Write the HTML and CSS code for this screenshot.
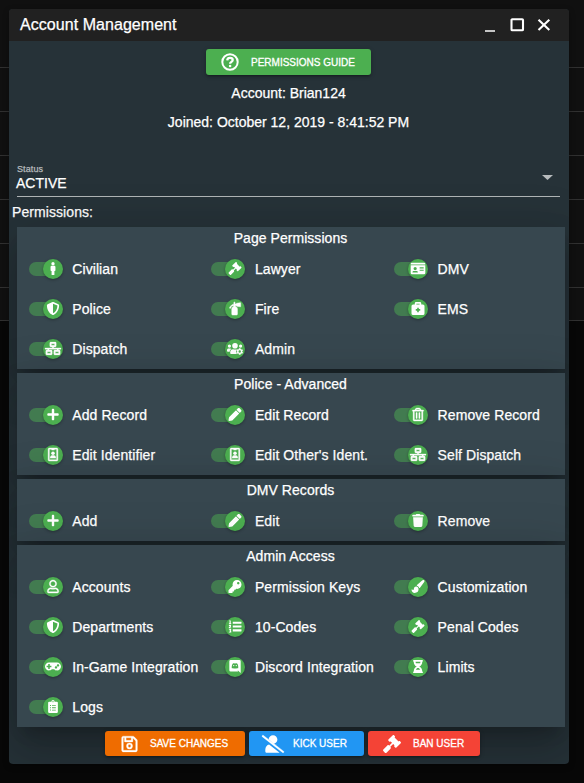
FILE: index.html
```html
<!DOCTYPE html>
<html lang="en">
<head>
<meta charset="utf-8">
<title>Account Management</title>
<link rel="stylesheet" href="styles.css">
</head>
<body>
<svg class="sprite" aria-hidden="true">
<symbol id="male" viewBox="0 0 192 512"><path d="M96 0c35.346 0 64 28.654 64 64s-28.654 64-64 64-64-28.654-64-64S60.654 0 96 0m48 144h-11.36c-22.711 10.443-49.59 10.894-73.28 0H48c-26.51 0-48 21.49-48 48v136c0 13.255 10.745 24 24 24h16v136c0 13.255 10.745 24 24 24h64c13.255 0 24-10.745 24-24V352h16c13.255 0 24-10.745 24-24V192c0-26.51-21.49-48-48-48z"/></symbol>
<symbol id="gavel" viewBox="0 0 512 512"><path d="M504.971 199.362l-22.627-22.627c-9.373-9.373-24.569-9.373-33.941 0l-5.657 5.657L329.608 69.255l5.657-5.657c9.373-9.373 9.373-24.569 0-33.941L312.638 7.029c-9.373-9.373-24.569-9.373-33.941 0L154.246 131.48c-9.373 9.373-9.373 24.569 0 33.941l22.627 22.627c9.373 9.373 24.569 9.373 33.941 0l5.657-5.657 39.598 39.598-81.04 81.04-5.657-5.657c-12.497-12.497-32.758-12.497-45.255 0L9.373 412.118c-12.497 12.497-12.497 32.758 0 45.255l45.255 45.255c12.497 12.497 32.758 12.497 45.255 0l114.745-114.745c12.497-12.497 12.497-32.758 0-45.255l-5.657-5.657 81.04-81.04 39.598 39.598-5.657 5.657c-9.373 9.373-9.373 24.569 0 33.941l22.627 22.627c9.373 9.373 24.569 9.373 33.941 0l124.451-124.451c9.372-9.372 9.372-24.568 0-33.941z"/></symbol>
<symbol id="shield" viewBox="0 0 512 512"><path d="M466.5 83.7l-192-80a48.15 48.15 0 0 0-36.9 0l-192 80C27.7 91.1 16 108.6 16 128c0 198.5 114.5 335.7 221.5 380.3 11.8 4.9 25.1 4.9 36.9 0C360.1 472.6 496 349.3 496 128c0-19.4-11.7-36.9-29.5-44.3zM256.1 446.3l-.1-381 175.9 73.3c-3.3 151.4-82.1 261.1-175.8 307.7z"/></symbol>
<symbol id="key" viewBox="0 0 512 512"><path d="M512 176.001C512 273.203 433.202 352 336 352c-11.22 0-22.19-1.062-32.827-3.069l-24.012 27.014A23.999 23.999 0 0 1 261.223 384H224v40c0 13.255-10.745 24-24 24h-40v40c0 13.255-10.745 24-24 24H24c-13.255 0-24-10.745-24-24v-78.059c0-6.365 2.529-12.47 7.029-16.971l161.802-161.802C163.108 213.814 160 195.271 160 176 160 78.798 238.797.001 335.999 0 433.488-.001 512 78.511 512 176.001zM336 128c0 26.51 21.49 48 48 48s48-21.49 48-48-21.49-48-48-48-48 21.49-48 48z"/></symbol>
<symbol id="pencil" viewBox="0 0 512 512"><path d="M497.9 142.1l-46.1 46.1c-4.7 4.7-12.3 4.7-17 0l-111-111c-4.7-4.7-4.7-12.3 0-17l46.1-46.1c18.7-18.7 49.1-18.7 67.9 0l60.1 60.1c18.8 18.7 18.8 49.1 0 67.9zM284.2 99.8L21.6 362.4.4 483.9c-2.9 16.4 11.4 30.6 27.8 27.8l121.5-21.3 262.6-262.6c4.7-4.7 4.7-12.3 0-17l-111-111c-4.8-4.7-12.4-4.7-17.1 0z"/></symbol>
<symbol id="plus" viewBox="0 0 448 512"><path d="M416 208H272V64c0-17.67-14.33-32-32-32h-32c-17.67 0-32 14.33-32 32v144H32c-17.67 0-32 14.33-32 32v32c0 17.67 14.33 32 32 32h144v144c0 17.67 14.33 32 32 32h32c17.67 0 32-14.33 32-32V304h144c17.67 0 32-14.33 32-32v-32c0-17.67-14.33-32-32-32z"/></symbol>
<symbol id="trash" viewBox="0 0 448 512"><path d="M432 32H312l-9.4-18.7A24 24 0 0 0 281.1 0H166.8a23.72 23.72 0 0 0-21.4 13.3L136 32H16A16 16 0 0 0 0 48v32a16 16 0 0 0 16 16h416a16 16 0 0 0 16-16V48a16 16 0 0 0-16-16zM53.2 467a48 48 0 0 0 47.9 45h245.8a48 48 0 0 0 47.9-45L416 128H32z"/></symbol>
<symbol id="trash-outline" viewBox="0 0 448 512"><path stroke="#fff" stroke-width="14" d="M268 416h24a12 12 0 0 0 12-12V188a12 12 0 0 0-12-12h-24a12 12 0 0 0-12 12v216a12 12 0 0 0 12 12zM432 80h-82.41l-34-56.7A48 48 0 0 0 274.41 0H173.59a48 48 0 0 0-41.16 23.3L98.41 80H16A16 16 0 0 0 0 96v16a16 16 0 0 0 16 16h16v336a48 48 0 0 0 48 48h288a48 48 0 0 0 48-48V128h16a16 16 0 0 0 16-16V96a16 16 0 0 0-16-16zM171.84 50.91A6 6 0 0 1 177 48h94a6 6 0 0 1 5.15 2.91L293.61 80H154.39zM368 464H80V128h288zm-212-48h24a12 12 0 0 0 12-12V188a12 12 0 0 0-12-12h-24a12 12 0 0 0-12 12v216a12 12 0 0 0 12 12z"/></symbol>
<symbol id="user" viewBox="0 0 448 512"><path stroke="#fff" stroke-width="14" d="M313.6 304c-28.7 0-42.5 16-89.6 16-47.1 0-60.8-16-89.6-16C60.2 304 0 364.2 0 438.4V464c0 26.5 21.5 48 48 48h352c26.5 0 48-21.5 48-48v-25.6c0-74.2-60.2-134.4-134.4-134.4zM400 464H48v-25.6c0-47.6 38.8-86.4 86.4-86.4 14.6 0 38.3 16 89.6 16 51.7 0 74.9-16 89.6-16 47.6 0 86.4 38.8 86.4 86.4V464zM224 288c79.5 0 144-64.5 144-144S303.5 0 224 0 80 64.5 80 144s64.5 144 144 144zm0-240c52.9 0 96 43.1 96 96s-43.1 96-96 96-96-43.1-96-96 43.1-96 96-96z"/></symbol>
<symbol id="gamepad" viewBox="0 0 640 512"><path d="M480 96H160C71.6 96 0 167.6 0 256s71.6 160 160 160c44.8 0 85.2-18.4 114.2-48h91.5c29 29.6 69.5 48 114.2 48 88.4 0 160-71.6 160-160S568.4 96 480 96zM256 276c0 6.6-5.4 12-12 12h-52v52c0 6.6-5.4 12-12 12h-40c-6.6 0-12-5.4-12-12v-52H76c-6.6 0-12-5.4-12-12v-40c0-6.6 5.4-12 12-12h52v-52c0-6.6 5.4-12 12-12h40c6.6 0 12 5.4 12 12v52h52c6.6 0 12 5.4 12 12v40zm184 68c-26.5 0-48-21.5-48-48s21.5-48 48-48 48 21.5 48 48-21.5 48-48 48zm80-80c-26.5 0-48-21.5-48-48s21.5-48 48-48 48 21.5 48 48-21.5 48-48 48z"/></symbol>
<symbol id="id-card" viewBox="0 0 576 512"><path fill-rule="evenodd" d="M48 32h480a48 48 0 0 1 48 48v16H0V80a48 48 0 0 1 48-48zM0 128h576v304a48 48 0 0 1-48 48H48a48 48 0 0 1-48-48zm352 64v32h160v-32zm0 64v32h160v-32zm0 64v32h160v-32zM176 192a64 64 0 1 0 0 128 64 64 0 0 0 0-128zM66 396c-3 12 4 20 14 20h192c10 0 17-8 14-20-8-26-32-44-61-44h-98c-29 0-53 18-61 44z"/></symbol>
<symbol id="medkit" viewBox="0 0 512 512"><path fill-rule="evenodd" d="M128 96V56a56 56 0 0 1 56-56h144a56 56 0 0 1 56 56v40h64a64 64 0 0 1 64 64v288a64 64 0 0 1-64 64H64a64 64 0 0 1-64-64V160a64 64 0 0 1 64-64zm64 0h128V64H192zm32 128v56h-56v64h56v56h64v-56h56v-64h-56v-56z"/></symbol>
<symbol id="extinguisher" viewBox="0 0 448 512"><path stroke="#fff" stroke-width="18" d="M434 26 288 51c-10 2-16 7-16 16v11h-46V24a24 24 0 0 0-48 0v62C110 100 58 126 12 220c-9 20 0 30 10 34s26 2 33-14c25-58 54-84 92-88h20v24c-42 16-71 55-71 100v204c0 18 14 32 32 32h160c18 0 32-14 32-32V276c0-46-30-86-74-101v-41h26v13c0 8 6 14 16 16l146 25c8 1 14-5 14-13V39c0-8-6-14-14-13z"/></symbol>
<symbol id="users-cog" viewBox="0 0 640 512"><circle cx="96" cy="160" r="64"/><circle cx="320" cy="144" r="112"/><circle cx="544" cy="160" r="64"/><path d="M64 256h64c20 0 36 8 48 20-42 24-62 58-68 108H32c-18 0-32-14-32-32v-32c0-36 28-64 64-64zM128 432v-29c0-66 50-115 115-115 52 16 102 16 151 0-38 70-34 132 5 192H176c-26 0-48-22-48-48z"/><path fill-rule="evenodd" d="M477 242h64l7 38 24 14 36-13 32 55-29 25v28l29 25-32 55-36-13-24 14-7 38h-64l-7-38-24-14-36 13-32-55 29-25v-28l-29-25 32-55 36 13 24-14zm32 86a48 48 0 1 0 0 96 48 48 0 0 0 0-96z"/></symbol>
<symbol id="network" viewBox="0 0 640 512"><path fill-rule="evenodd" stroke="#fff" stroke-width="12" d="M224 0h192c18 0 32 14 32 32v128c0 18-14 32-32 32h-64v40h272c9 0 16 7 16 16v24c0 9-7 16-16 16h-80v32h32c18 0 32 14 32 32v128c0 18-14 32-32 32H384c-18 0-32-14-32-32V352c0-18 14-32 32-32h96v-32H160v32h96c18 0 32 14 32 32v128c0 18-14 32-32 32H64c-18 0-32-14-32-32V352c0-18 14-32 32-32h32v-32H16c-9 0-16-7-16-16v-24c0-9 7-16 16-16h272v-40h-64c-18 0-32-14-32-32V32c0-18 14-32 32-32zm32 64v64h128V64zM96 384v64h128v-64zm320 0v64h128v-64z"/></symbol>
<symbol id="badge" viewBox="0 0 384 512"><path fill-rule="evenodd" stroke="#fff" stroke-width="16" d="M48 0h288a48 48 0 0 1 48 48v416a48 48 0 0 1-48 48H48a48 48 0 0 1-48-48V48A48 48 0 0 1 48 0zm0 48v416h288V48H248v32H136V48z"/><circle cx="192" cy="206" r="70"/><path d="M76 406c0-68 34-116 80-116h72c46 0 80 48 80 116z"/></symbol>
<symbol id="list" viewBox="0 0 512 512"><path d="M168 64h328c9 0 16 7 16 16v48c0 9-7 16-16 16H168zM168 216h328c9 0 16 7 16 16v48c0 9-7 16-16 16H168zM168 368h328c9 0 16 7 16 16v48c0 9-7 16-16 16H168zM24 16h64v116h20v28H16v-28h24V44H24zM16 188h84v65l-38 39h42v28H12v-31l48-52H16zM16 352h88v64l-15 12 19 18v50H12v-30h48v-22H34v-28h30v-34H16z"/></symbol>
<symbol id="discord" viewBox="0 0 448 512"><path fill-rule="evenodd" d="M52 0h344a52 52 0 0 1 52 52v460l-55-49-31-28-32-30 13 46H52a52 52 0 0 1-52-52V52A52 52 0 0 1 52 0zm45 329c17 0 31-1 48-1 35 14 123 14 158 0l47 1c10-76-7-151-34-184-22-16-43-20-62-19l-10 12c-13-2-27-2-40 0l-10-12c-20 0-41 5-62 19-28 46-43 112-35 184zm77-137a26 28 0 1 1 0 56 26 28 0 0 1 0-56zm100 0a26 28 0 1 1 0 56 26 28 0 0 1 0-56z"/></symbol>
<symbol id="brush" viewBox="0 0 512 512"><path d="M460 0c-16 0-30 8-42 18L225 189c-10 10-17 22-18 36 45 12 83 46 98 91 15-3 28-12 37-25L499 76c7-12 13-24 13-37 0-23-25-39-52-39zM184 259c-58 0-91 42-91 92 0 42-30 54-70 25-12-9-23 0-23 12 9 76 52 124 126 124 90 0 153-58 153-143 0-60-43-110-95-110z"/></symbol>
<symbol id="hourglass" viewBox="0 0 384 512"><path fill-rule="evenodd" d="M24 0h336a24 24 0 0 1 24 24v16a24 24 0 0 1-24 24c0 91-51 168-120 192 69 24 120 101 120 192a24 24 0 0 1 24 24v16a24 24 0 0 1-24 24H24a24 24 0 0 1-24-24v-16a24 24 0 0 1 24-24c0-91 51-168 120-192C75 232 24 155 24 64A24 24 0 0 1 0 40V24A24 24 0 0 1 24 0zm72 64c0 24 6 46 16 64h160c10-18 16-40 16-64zm14 320h164c-17-42-47-69-82-69s-65 27-82 69z"/></symbol>
<symbol id="clipboard" viewBox="0 0 384 512"><path fill-rule="evenodd" d="M48 64h80a64 64 0 0 1 128 0h80a48 48 0 0 1 48 48v352a48 48 0 0 1-48 48H48a48 48 0 0 1-48-48V112a48 48 0 0 1 48-48zm144-24a24 24 0 1 0 0 48 24 24 0 0 0 0-48zm-40 158v30h150v-30zm0 92v30h150v-30zm0 92v30h150v-30zM76 194v38h38v-38zm0 92v38h38v-38zm0 92v38h38v-38z"/></symbol>
<symbol id="save" viewBox="0 0 448 512"><path fill-rule="evenodd" stroke="#fff" stroke-width="8" d="M48 32h268a48 48 0 0 1 34 14l84 84a48 48 0 0 1 14 34v268a48 48 0 0 1-48 48H48a48 48 0 0 1-48-48V80a48 48 0 0 1 48-48zm0 48v352h352V168l-80-80v88a24 24 0 0 1-24 24H104a24 24 0 0 1-24-24V80zm80 0v72h144V80zM224 224a88 88 0 1 1 0 176 88 88 0 0 1 0-176zm0 48a40 40 0 1 0 0 80 40 40 0 0 0 0-80z"/></symbol>
<symbol id="user-slash" viewBox="0 0 640 512"><path stroke="#fff" stroke-width="10" d="M634 471 36 3.500c-9-6-17-4-23 3L3.500 19c-6 8-5 17 3 23L604 508c7 6 17 5 23-3l10-12c5-7 4-17-3-22z"/><path d="M96 422v42c0 26 22 48 48 48h352c6 0 12-1 17-3L207 270c-60 10-111 76-111 152zM320 256c71 0 128-57 128-128S391 0 320 0c-68 0-122 50-128 118l149 136c30 20 70 34 92 34z"/></symbol>
<symbol id="help" viewBox="0 0 18 18"><circle class="stroke" cx="9" cy="9" r="7.700" stroke-width="2"/><path class="stroke" stroke-width="2.300" d="M6.200 7.300C6.400 5.700 7.500 4.900 9 4.900c1.600 0 2.700.8 2.700 2.100 0 1.900-2.600 1.800-2.600 3.800"/><circle cx="9.100" cy="13" r="1.300"/></symbol>
</svg>

<div class="backdrop" aria-hidden="true"><div class="brow first"></div><div class="brow"></div><div class="brow"></div><div class="brow"></div><div class="brow"></div><div class="brow"></div><div class="brow last"></div></div>

<main class="window">
  <header class="titlebar">
    <h1>Account Management</h1>
    <svg class="controls" viewBox="0 0 68 16" aria-hidden="true"><path fill="#c4c4c4" d="M0 13h10v2H0z"/><rect x="26.500" y="2.300" width="11.500" height="11" rx=".8" stroke-width="2.100" class="stroke"/><path class="stroke" stroke-width="2.100" d="m53.500 2.700 10.800 10.300m0-10.300L53.500 13"/></svg>
  </header>
  <section class="account">
    <button class="btn guide"><svg class="help"><use href="#help"/></svg>PERMISSIONS GUIDE</button>
    <p>Account: Brian124</p>
    <p>Joined: October 12, 2019 - 8:41:52 PM</p>
  </section>
  <div class="select"><div><span class="caption">Status</span><span class="value">ACTIVE</span></div><i class="caret"></i></div>
  <h2 class="heading">Permissions:</h2>
  <div class="cards">
    <section class="card"><h3>Page Permissions</h3><div class="grid">
      <div class="perm"><span class="toggle"><i><svg><use href="#male"/></svg></i></span>Civilian</div>
      <div class="perm"><span class="toggle"><i><svg><use href="#gavel"/></svg></i></span>Lawyer</div>
      <div class="perm"><span class="toggle"><i><svg><use href="#id-card"/></svg></i></span>DMV</div>
      <div class="perm"><span class="toggle"><i><svg><use href="#shield"/></svg></i></span>Police</div>
      <div class="perm"><span class="toggle"><i><svg><use href="#extinguisher"/></svg></i></span>Fire</div>
      <div class="perm"><span class="toggle"><i><svg><use href="#medkit"/></svg></i></span>EMS</div>
      <div class="perm"><span class="toggle"><i><svg><use href="#network"/></svg></i></span>Dispatch</div>
      <div class="perm"><span class="toggle"><i><svg><use href="#users-cog"/></svg></i></span>Admin</div>
    </div></section>
    <section class="card"><h3>Police - Advanced</h3><div class="grid">
      <div class="perm"><span class="toggle"><i><svg><use href="#plus"/></svg></i></span>Add Record</div>
      <div class="perm"><span class="toggle"><i><svg><use href="#pencil"/></svg></i></span>Edit Record</div>
      <div class="perm"><span class="toggle"><i><svg><use href="#trash-outline"/></svg></i></span>Remove Record</div>
      <div class="perm"><span class="toggle"><i><svg><use href="#badge"/></svg></i></span>Edit Identifier</div>
      <div class="perm"><span class="toggle"><i><svg><use href="#badge"/></svg></i></span>Edit Other's Ident.</div>
      <div class="perm"><span class="toggle"><i><svg><use href="#network"/></svg></i></span>Self Dispatch</div>
    </div></section>
    <section class="card"><h3>DMV Records</h3><div class="grid">
      <div class="perm"><span class="toggle"><i><svg><use href="#plus"/></svg></i></span>Add</div>
      <div class="perm"><span class="toggle"><i><svg><use href="#pencil"/></svg></i></span>Edit</div>
      <div class="perm"><span class="toggle"><i><svg><use href="#trash"/></svg></i></span>Remove</div>
    </div></section>
    <section class="card"><h3>Admin Access</h3><div class="grid">
      <div class="perm"><span class="toggle"><i><svg><use href="#user"/></svg></i></span>Accounts</div>
      <div class="perm"><span class="toggle"><i><svg><use href="#key"/></svg></i></span>Permission Keys</div>
      <div class="perm"><span class="toggle"><i><svg><use href="#brush"/></svg></i></span>Customization</div>
      <div class="perm"><span class="toggle"><i><svg><use href="#shield"/></svg></i></span>Departments</div>
      <div class="perm"><span class="toggle"><i><svg><use href="#list"/></svg></i></span>10-Codes</div>
      <div class="perm"><span class="toggle"><i><svg><use href="#gavel"/></svg></i></span>Penal Codes</div>
      <div class="perm"><span class="toggle"><i><svg><use href="#gamepad"/></svg></i></span>In-Game Integration</div>
      <div class="perm"><span class="toggle"><i><svg><use href="#discord"/></svg></i></span>Discord Integration</div>
      <div class="perm"><span class="toggle"><i><svg><use href="#hourglass"/></svg></i></span>Limits</div>
      <div class="perm"><span class="toggle"><i><svg><use href="#clipboard"/></svg></i></span>Logs</div>
    </div></section>
  </div>
  <footer class="actions">
    <button class="btn save"><svg><use href="#save"/></svg>SAVE CHANGES</button>
    <button class="btn kick"><svg><use href="#user-slash"/></svg>KICK USER</button>
    <button class="btn ban"><svg><use href="#gavel"/></svg>BAN USER</button>
  </footer>
</main>
</body>
</html>
```
FILE: styles.css
```css
* { box-sizing: border-box; margin: 0; padding: 0; }
body {
  height: 783px;
  padding: 9px 15px 19px 9px;
  overflow: hidden;
  background: #070707;
  color: #fff;
  font: 14px/20px "Liberation Sans", Arial, sans-serif;
  -webkit-text-stroke: .25px currentColor;
}
h1, h2, h3 { font-weight: 400; }
svg { display: block; overflow: visible; fill: #fff; }
symbol { overflow: visible; }
.stroke { fill: none; stroke: #fff; }
.sprite { position: absolute; width: 0; height: 0; }

.backdrop { position: absolute; inset: 0 0 auto; z-index: -1; }
.brow { height: 44px; background: #101010; border-bottom: 1px solid #303030; }
.brow.first { height: 68px; }
.brow.last { height: 33px; }

.window {
  height: 755px;
  border-radius: 4px;
  overflow: hidden;
  background: #263238;
  box-shadow: 0 2px 6px rgba(0, 0, 0, .3);
}
.titlebar {
  display: flex;
  justify-content: space-between;
  height: 32px;
  padding: 6px 16px 0 11px;
  background: #212121;
}
.titlebar h1 { font-size: 16px; letter-spacing: .05px; }
.controls { width: 68px; height: 16px; margin-top: 2px; }

.account { display: flex; flex-direction: column; align-items: center; height: 120px; padding: 8px 1px 0 0; }
.account p { height: 29px; line-height: 20px; }
.btn {
  display: flex;
  align-items: center;
  height: 25px;
  border: 0;
  border-radius: 3px;
  color: #fff;
  font: 10px/25px "Liberation Sans", Arial, sans-serif;
  -webkit-text-stroke: .3px currentColor;
  white-space: nowrap;
  box-shadow: 0 1px 5px rgba(0, 0, 0, .2), 0 2px 2px rgba(0, 0, 0, .14), 0 3px 1px -2px rgba(0, 0, 0, .12);
}
.guide { width: 165px; height: 26px; margin-bottom: 8px; padding-left: 15px; background: #4caf50; }
.help { width: 18px; height: 18px; margin-right: 12px; }

.select {
  display: flex;
  justify-content: space-between;
  height: 36px;
  margin: 0 9px 0 8px;
  border-bottom: 1px solid #b0b5b6;
}
.caption { display: block; height: 14px; padding-top: 1px; color: #b7bbbd; font-size: 9px; line-height: 14px; letter-spacing: .1px; }
.value { display: block; margin-left: -1px; line-height: 16px; }
.caret { width: 11px; height: 5px; margin: 14px 7px 0 0; background: #b7bbbd; clip-path: polygon(0 0, 100% 0, 50% 100%); }
.heading { height: 30px; padding: 5px 0 0 3px; font-size: 14px; letter-spacing: .08px; }

.cards { display: flex; flex-direction: column; gap: 4px; width: 548px; margin-left: 8px; }
.card {
  background: #37474f;
  box-shadow: 0 11px 15px -7px rgba(0, 0, 0, .2), 0 24px 38px 3px rgba(0, 0, 0, .14), 0 9px 46px 8px rgba(0, 0, 0, .12);
}
.card h3 { height: 22px; padding-right: 1px; font-size: 14px; line-height: 22px; text-align: center; letter-spacing: .05px; }
.grid { display: grid; grid-template-columns: repeat(3, 1fr); grid-auto-rows: 40px; }
.perm { display: flex; align-items: center; padding-left: 11.6px; letter-spacing: .08px; white-space: nowrap; }
.toggle {
  display: flex;
  align-items: center;
  justify-content: flex-end;
  width: 32px;
  height: 14px;
  margin-right: 11.7px;
  border-radius: 7px;
  background: #427b50;
}
.toggle i {
  display: flex;
  flex: none;
  align-items: center;
  justify-content: center;
  width: 20px;
  height: 20px;
  margin-right: -2px;
  border-radius: 50%;
  background: #4caf50;
  box-shadow: 0 1px 3px rgba(0, 0, 0, .3);
}
.toggle svg { width: 16px; height: 13px; margin-top: -1px; }

.actions { display: flex; justify-content: center; gap: 4px; padding: 4px 0 0 7px; }
.actions svg { flex: none; height: 18px; }
.save { width: 140px; padding-left: 16px; background: #ef6c00; }
.save svg { width: 17px; margin-right: 12px; }
.kick { width: 115px; padding-left: 13px; background: #2196f3; }
.kick svg { width: 22px; margin-right: 9px; }
.ban { width: 112px; padding-left: 15px; background: #f44336; }
.ban svg { width: 18px; margin-right: 12px; }
```
